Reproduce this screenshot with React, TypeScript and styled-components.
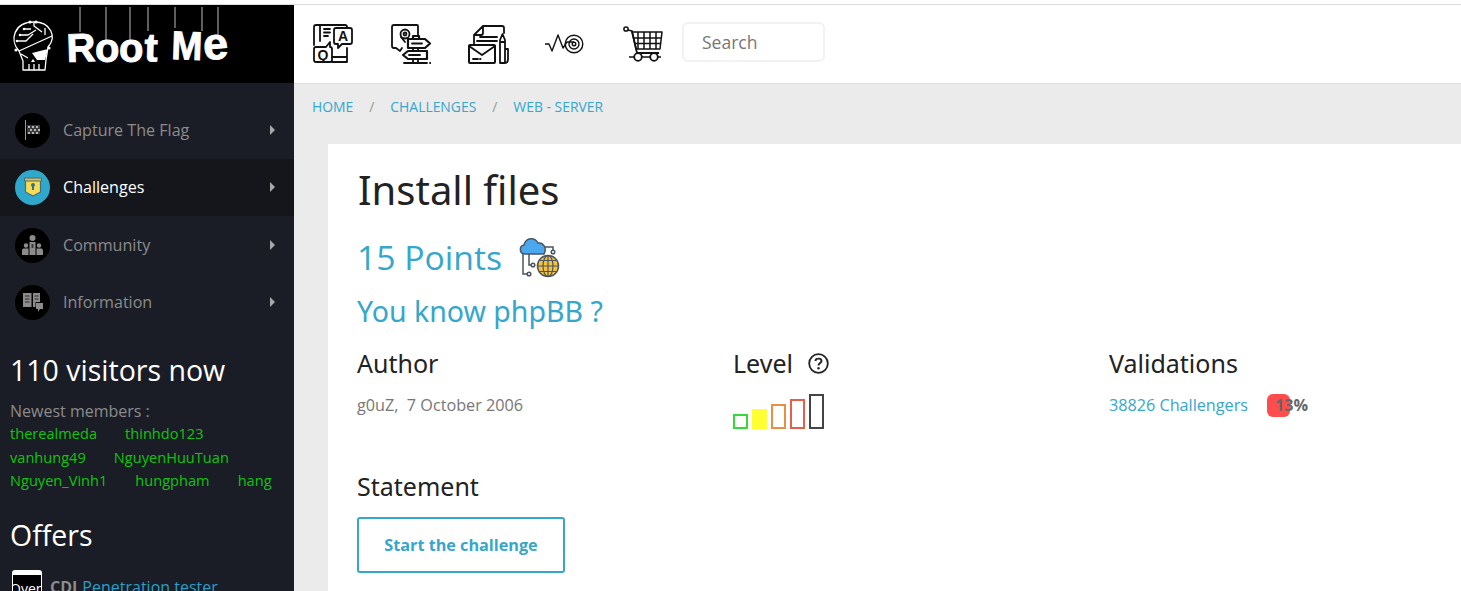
import React from 'react';
import styled, { createGlobalStyle } from 'styled-components';

const BLUE = '#36a6cb';

const GlobalStyle = createGlobalStyle`
    html, body {
        margin: 0;
        padding: 0;
        height: 100%;
        overflow: hidden;
        background: #ffffff;
        font-family: "Open Sans", "Noto Sans", sans-serif;
    }
    * {
        box-sizing: border-box;
    }
`;

const LOGO_LETTERS = [
    { char: 'R', x: 67, y: 57, string: 80, hang: 27, rotate: -2 },
    { char: 'o', x: 95, y: 57, string: 106, hang: 35, rotate: 0 },
    { char: 'o', x: 119, y: 57, string: 130, hang: 35, rotate: 0 },
    { char: 't', x: 144, y: 56, string: 148, hang: 26, rotate: 2 },
    { char: 'M', x: 171, y: 54, string: 175, hang: 23, rotate: 2 },
    { char: 'e', x: 204, y: 55, string: 218, hang: 33, rotate: -4 },
];

const Logo = () => (
    <svg width="294" height="78" viewBox="0 0 294 78">
        <g fill="none" stroke="#fff" strokeWidth="1.3" strokeLinejoin="round">
            <path d="M19 46 C9 35 14 17 34 17 C51 17 57 32 48 42 L46 55 L45 65 H23 L23 56 Z" />
            <path d="M19 46 L52 31" />
            <path d="M17 36 H26 L33 29 M20 30 H28 L36 25 M25 24 H31 M34 17 V21 L42 27 M45 23 V30" />
            <path d="M21 49 L28 53 M29 59 V65 M34 59 V65 M39 59 V65" />
        </g>
        <path d="M32 48 L48 44 L45 55 L37 55 Z" fill="#fff" />
        <path d="M31 57 L33 54 L35 57 Z" fill="#fff" />
        <g fill="#fff">
            <circle cx="30" cy="17" r="1.6" />
            <circle cx="36" cy="17" r="1.6" />
            <circle cx="24" cy="24" r="1.3" />
            <circle cx="20" cy="30" r="1.3" />
            <circle cx="17" cy="36" r="1.3" />
            <circle cx="16" cy="45" r="1.6" />
            <circle cx="49" cy="43" r="1.6" />
        </g>
        <g stroke="#bdbdbd" strokeWidth="1">
            {LOGO_LETTERS.map(l => (
                <line key={l.string} x1={l.string} y1="2" x2={l.string} y2={l.hang} />
            ))}
            <line x1="202" y1="2" x2="202" y2="26" />
        </g>
        <g fill="#fff" stroke="#fff" strokeWidth="0.9" fontFamily="'Liberation Sans', sans-serif" fontWeight="700" fontSize="40">
            {LOGO_LETTERS.map(l => (
                <text
                    key={l.string}
                    x={l.x}
                    y={l.y}
                    fontSize={l.char === 'e' ? 45 : 40}
                    transform={`rotate(${l.rotate} ${l.x} ${l.y})`}
                    textLength={l.char === 'M' ? 31 : undefined}
                    lengthAdjust="spacingAndGlyphs"
                >
                    {l.char}
                </text>
            ))}
        </g>
    </svg>
);

const strokeProps = { fill: 'none', stroke: '#111', strokeWidth: 1.8, strokeLinejoin: 'round' as const, strokeLinecap: 'round' as const };

const FaqIcon = () => (
    <svg width="40" height="40" viewBox="0 0 40 40">
        <g {...strokeProps}>
            <path d="M1 21 V3 Q1 1 3 1 H32 Q34 1 34 3 V4 M7 1 V17 M34 24 V38 H19 M19 33 H34" />
            <path d="M11 5 H17 M11 8.500 H17 M11 12 H15" />
            <path d="M23 4 H37 Q39 4 39 6 V18 Q39 20 37 20 H29 L25 24 V20 H23 Q21 20 21 18 V6 Q21 4 23 4 Z" />
            <path d="M3 23 H13 L17 18 V23 Q19 23 19 25 V36 Q19 38 17 38 H3 Q1 38 1 36 V25 Q1 23 3 23 Z" />
        </g>
        <text x="30" y="17" textAnchor="middle" fontFamily="'Liberation Sans', sans-serif" fontWeight="700" fontSize="14" fill="#111">A</text>
        <text x="10" y="36" textAnchor="middle" fontFamily="'Liberation Sans', sans-serif" fontWeight="700" fontSize="14" fill="#111">Q</text>
    </svg>
);

const RoadmapIcon = () => (
    <svg width="40" height="41" viewBox="0 0 40 41">
        <g {...strokeProps}>
            <path d="M27 11 V2 Q27 1 26 1 H3 Q1 1 1 3 V22 Q1 24 3 24 H5 L9 27 L11 24" />
            <circle cx="14" cy="10" r="4.500" />
            <circle cx="14" cy="10" r="1.500" />
            <path d="M10 13 L14 18" />
            <path d="M17 15 H34 L39 19.500 L34 24 H17 Z M22 15 V12 H28 V15" strokeWidth="2.200" />
            <path d="M17 27 H36 V35 H17 L12 31 Z" strokeWidth="2.200" />
            <path d="M22 24 V27 M27 24 V27 M22 35 V39 M27 35 V39 M13 39 H36 M39 39 H39.500 M21 19.500 H31 M18 31 H29" />
        </g>
    </svg>
);

const DocsIcon = () => (
    <svg width="41" height="39" viewBox="0 0 41 39">
        <g {...strokeProps}>
            <path d="M6 20 V10 L15 1 H34 Q36 1 36 3 V8 M15 1 V8 Q15 10 13 10 H6" />
            <path d="M12 12 H29 M9 16 H29" />
            <rect x="1" y="20" width="26" height="18" rx="1" strokeWidth="2" />
            <path d="M1 21 L14 30 L27 21 M5 34 H10 M12 34 H12.500" />
            <path d="M32 15 L34.500 9 L37 15 V38 H32 Z M32 17 H37 M37 24 H40 V34 Q40 38 37 38" />
        </g>
    </svg>
);

const TargetIcon = () => (
    <svg width="39" height="22" viewBox="0 0 39 22">
        <g fill="none" stroke="#111" strokeWidth="1.400" strokeLinejoin="round">
            <path d="M0 11 H4 L7 18 L13 2 L18 15 L22 9 H29" />
            <circle cx="29" cy="11" r="8.800" />
            <circle cx="29" cy="11" r="5" />
            <circle cx="29" cy="11" r="1.800" />
        </g>
    </svg>
);

const CartIcon = () => (
    <svg width="40" height="36" viewBox="0 0 40 36">
        <g fill="none" stroke="#111" strokeWidth="1.500" strokeLinejoin="round">
            <circle cx="3" cy="3" r="2.100" />
            <path d="M5 4 L9 5 L14 27 H36" strokeWidth="1.800" />
            <path d="M9 6 H39 L37 23 H13 Z" />
            <path d="M15 6 V23 M21 6 V23 M27 6 V23 M33 6 V23 M10 12 H38 M11 17.500 H37" />
            <circle cx="15" cy="31" r="3.800" strokeWidth="1.800" />
            <circle cx="31" cy="31" r="3.800" strokeWidth="1.800" />
            <path d="M6 31 H11 M19 31 H27 M35 31 H38" />
        </g>
    </svg>
);

const FlagIcon = () => (
    <svg width="17" height="20" viewBox="0 0 17 20">
        <path d="M1.500 0 V20" stroke="#9a9a9a" />
        <path d="M3 5 H16 V14 H3 Z" fill="#3b3b3b" />
        <path d="M4 6 H6 V8 H4 Z M8 6 H10 V8 H8 Z M12 6 H14 V8 H12 Z M6 9 H8 V11 H6 Z M10 9 H12 V11 H10 Z M14 9 H16 V11 H14 Z M4 12 H6 V14 H4 Z M8 12 H10 V14 H8 Z M12 12 H14 V14 H12 Z" fill="#b5b5b5" />
    </svg>
);

const ShieldIcon = () => (
    <svg width="18" height="20" viewBox="0 0 18 20">
        <path d="M1.500 2 H16.500 V15 L9 19 L1.500 15 Z" fill="#f6dc55" stroke="#3f6f88" strokeWidth="1.200" />
        <path d="M0.500 1 H17.500 V4 H0.500 Z" fill="#e0bd3d" stroke="#3f6f88" strokeWidth="1" />
        <circle cx="9" cy="8" r="2" fill="#3f6f88" />
        <path d="M8 9 H10 V13 H8 Z" fill="#3f6f88" />
    </svg>
);

const PeopleIcon = () => (
    <svg width="21" height="20" viewBox="0 0 21 20">
        <g fill="#8c8c8c">
            <circle cx="10.500" cy="3" r="3" />
            <path d="M7.500 7 H13.500 V20 H7.500 Z" />
            <circle cx="4" cy="10.500" r="2.200" />
            <circle cx="17" cy="10.500" r="2.200" />
            <path d="M0 20 V16 C0 14 1 13.500 2 13.500 H6.500 V20 Z M14.500 13.500 H19 C20 13.500 21 14 21 16 V20 H14.500 Z" />
        </g>
        <path d="M9.500 9 H11.500 V13 H9.500 Z" fill="#3a3a3a" />
    </svg>
);

const BookIcon = () => (
    <svg width="20" height="20" viewBox="0 0 20 20">
        <path d="M0 1 H8.500 V15 H0 Z M10 1 H17 V10 H12.500 V15 H10 Z" fill="#8c8c8c" />
        <path d="M13 11 H20 V17 H17 L15 20 V17 H13 Z" fill="#8c8c8c" />
        <path d="M2 4 H6.500 M2 7 H6.500 M2 10 H6.500 M11.500 4 H15.500 M11.500 7 H15.500" stroke="#2b2b2b" />
    </svg>
);

const CloudIcon = () => (
    <svg width="41" height="41" viewBox="0 0 41 41">
        <g fill="none" stroke="#4a5560" strokeWidth="1.500">
            <path d="M4 17 V37 H8 M10 17 V28 H12 M20 10 H34 V13" />
            <circle cx="34" cy="15" r="1.800" />
            <circle cx="14" cy="28" r="1.800" />
            <circle cx="10" cy="37" r="1.800" />
        </g>
        <path d="M6 17 C0 17 0 9 5 8 C7 0 16 0 19 6 C25 5 28 12 25 17 Z" fill="#4aa8ee" stroke="#4a5560" strokeWidth="1.500" />
        <circle cx="29" cy="29" r="10.500" fill="#f7c23c" stroke="#4a5560" strokeWidth="1.500" />
        <g fill="none" stroke="#4a5560" strokeWidth="1.200">
            <ellipse cx="29" cy="29" rx="5" ry="10.500" />
            <path d="M29 18.500 V39.500 M18.500 29 H39.500 M20.500 23.500 H37.500 M20.500 34.500 H37.500" />
        </g>
    </svg>
);

const QuestionIcon = () => (
    <svg width="21" height="21" viewBox="0 0 21 21">
        <circle cx="10.500" cy="10.500" r="9.300" fill="none" stroke="#222" strokeWidth="1.800" />
        <path d="M7.500 8 C7.500 4.800 13.500 4.800 13.500 8 C13.500 10 10.500 10 10.500 12.500" fill="none" stroke="#222" strokeWidth="1.900" />
        <circle cx="10.500" cy="15.200" r="1.200" fill="#222" />
    </svg>
);

const MENU = [
    { label: 'Capture The Flag', icon: <FlagIcon /> },
    { label: 'Challenges', icon: <ShieldIcon />, active: true },
    { label: 'Community', icon: <PeopleIcon /> },
    { label: 'Information', icon: <BookIcon /> },
];

const MEMBERS = [
    ['therealmeda', 'thinhdo123'],
    ['vanhung49', 'NguyenHuuTuan'],
    ['Nguyen_Vinh1', 'hungpham', 'hang'],
];

const BARS = [
    { height: 15, color: '#35d93a' },
    { height: 20, color: '#ffff33', filled: true },
    { height: 25, color: '#e58f47' },
    { height: 30, color: '#e5604c' },
    { height: 35, color: '#444444' },
];

const App: React.FC = () => (
    <>
        <GlobalStyle />
        <SPage>
            <SSidebar>
                <SLogoBar>
                    <Logo />
                </SLogoBar>
                <SMenu>
                    {MENU.map(item => (
                        <SMenuItem key={item.label} $active={item.active}>
                            <SMenuIcon $active={item.active}>{item.icon}</SMenuIcon>
                            <SMenuLabel>{item.label}</SMenuLabel>
                            <SCaret />
                        </SMenuItem>
                    ))}
                </SMenu>
                <SSideTitle>110 visitors now</SSideTitle>
                <SNewest>Newest members :</SNewest>
                {MEMBERS.map(row => (
                    <SMemberRow key={row[0]}>
                        {row.map(name => (
                            <span key={name}>{name}</span>
                        ))}
                    </SMemberRow>
                ))}
                <SOffersTitle>Offers</SOffersTitle>
                <SOffer>
                    <SOfferLogo>
                        <SOfferLogoText>Oven</SOfferLogoText>
                    </SOfferLogo>
                    <SOfferKind>CDI</SOfferKind>
                    <SOfferLink>Penetration tester</SOfferLink>
                </SOffer>
            </SSidebar>
            <SMain>
                <STopBar>
                    <SIconSlot $width={78}><FaqIcon /></SIconSlot>
                    <SIconSlot $width={77}><RoadmapIcon /></SIconSlot>
                    <SIconSlot $width={77}><DocsIcon /></SIconSlot>
                    <SIconSlot $width={78}><TargetIcon /></SIconSlot>
                    <SIconSlot $width={59}><CartIcon /></SIconSlot>
                    <SSearch placeholder="Search" readOnly />
                </STopBar>
                <SBreadcrumb>
                    <SCrumb>HOME</SCrumb>
                    <SCrumbSep>/</SCrumbSep>
                    <SCrumb>CHALLENGES</SCrumb>
                    <SCrumbSep>/</SCrumbSep>
                    <SCrumb>WEB - SERVER</SCrumb>
                </SBreadcrumb>
                <SCard>
                    <STitle>Install files</STitle>
                    <SPoints>
                        15 Points
                        <CloudIcon />
                    </SPoints>
                    <SSubtitle>You know phpBB ?</SSubtitle>
                    <SColumns>
                        <div>
                            <SHeading>Author</SHeading>
                            <SAuthor>g0uZ,&nbsp; 7 October 2006</SAuthor>
                        </div>
                        <div>
                            <SHeading>
                                Level
                                <QuestionIcon />
                            </SHeading>
                            <SBars>
                                {BARS.map(bar => (
                                    <SBar key={bar.height} $height={bar.height} $color={bar.color} $filled={bar.filled} />
                                ))}
                            </SBars>
                        </div>
                        <div>
                            <SHeading>Validations</SHeading>
                            <SValidations>
                                <SChallengers>38826 Challengers</SChallengers>
                                <SRate>13%</SRate>
                            </SValidations>
                        </div>
                    </SColumns>
                    <SStatement>Statement</SStatement>
                    <SStartButton>Start the challenge</SStartButton>
                </SCard>
            </SMain>
        </SPage>
    </>
);

export default App;

const SPage = styled.div`
    display: flex;
    width: 1461px;
    height: 591px;
    overflow: hidden;
    padding-top: 5px;
    background: linear-gradient(#ffffff 4px, #dcdcdc 4px, #dcdcdc 5px, #ffffff 5px);
`;

const SSidebar = styled.aside`
    width: 294px;
    flex-shrink: 0;
    background-color: #1a1d26;
    color: #ffffff;
`;

const SLogoBar = styled.div`
    height: 78px;
    background-color: #000000;

    svg {
        display: block;
    }
`;

const SMenu = styled.nav`
    padding-top: 19px;
`;

const SMenuItem = styled.div<{ $active?: boolean }>`
    display: flex;
    align-items: center;
    height: 57px;
    padding: 0 15px 1px;
    background-color: ${p => (p.$active ? '#14161c' : 'transparent')};
    color: ${p => (p.$active ? '#ffffff' : '#8c8c8c')};

    &:nth-child(n + 3) {
        padding: 1px 15px 0;
    }
`;

const SMenuIcon = styled.div<{ $active?: boolean }>`
    display: flex;
    align-items: center;
    justify-content: center;
    width: 35px;
    height: 35px;
    border-radius: 50%;
    background-color: ${p => (p.$active ? '#2fa8cc' : '#000000')};
`;

const SMenuLabel = styled.span`
    margin-left: 13px;
    font-size: 16.100px;
    flex: 1;
`;

const SCaret = styled.span`
    width: 0;
    height: 0;
    margin-right: 4px;
    border-left: 5px solid #a8a8a8;
    border-top: 5px solid transparent;
    border-bottom: 5px solid transparent;
`;

const SSideTitle = styled.div`
    margin: 22px 0 0 10px;
    font-size: 28.500px;
    line-height: 37px;
`;

const SNewest = styled.div`
    margin: 11px 0 0 10px;
    font-size: 16px;
    line-height: 22px;
    color: #8c8c8c;
`;

const SMemberRow = styled.div`
    display: flex;
    gap: 28px;
    margin-left: 10px;
    font-size: 14.600px;
    line-height: 23.500px;
    color: #0fc40f;
`;

const SOffersTitle = styled.div`
    margin: 23px 0 0 10px;
    font-size: 28.500px;
    line-height: 38px;
`;

const SOffer = styled.div`
    display: flex;
    align-items: flex-start;
    margin: 16px 0 0 12px;
    font-size: 16px;
    line-height: 22px;
`;

const SOfferLogo = styled.div`
    width: 30px;
    height: 30px;
    padding: 5px 1px 0;
    overflow: hidden;
    border-radius: 3px;
    background-color: #ffffff;
`;

const SOfferLogoText = styled.div`
    height: 25px;
    padding-top: 3px;
    overflow: hidden;
    background-color: #000000;
    color: #ffffff;
    font-size: 14px;
    line-height: 22px;
    text-indent: -3px;
    white-space: nowrap;
`;

const SOfferKind = styled.b`
    margin: 6px 0 0 8px;
    color: #8c8c8c;
`;

const SOfferLink = styled.span`
    margin: 6px 0 0 5px;
    color: #2a9fc7;
`;

const SMain = styled.main`
    flex: 1;
    display: flex;
    flex-direction: column;
    background-color: #ebebeb;
`;

const STopBar = styled.header`
    display: flex;
    align-items: center;
    height: 79px;
    padding-left: 19px;
    background-color: #ffffff;
    border-bottom: 1px solid #dedede;
`;

const SIconSlot = styled.div<{ $width: number }>`
    width: ${p => p.$width}px;
    display: flex;
    align-items: center;

    svg {
        display: block;
    }
`;

const SSearch = styled.input`
    width: 143px;
    height: 40px;
    margin-bottom: 4px;
    padding: 0 18px;
    border: 2px solid #f2f2f2;
    border-radius: 6px;
    font-family: inherit;
    font-size: 17.500px;
    outline: none;

    &::placeholder {
        color: #777777;
        opacity: 1;
    }
`;

const SBreadcrumb = styled.div`
    display: flex;
    align-items: center;
    height: 45px;
    padding-left: 18px;
    font-size: 13.900px;
`;

const SCrumb = styled.span`
    color: ${BLUE};
`;

const SCrumbSep = styled.span`
    margin: 0 16px;
    color: #999999;
`;

const SCard = styled.section`
    flex: 1;
    margin: 15px 0 0 34px;
    padding: 19px 0 0 29px;
    background-color: #ffffff;
    color: #222222;
`;

const STitle = styled.h1`
    margin: 0 0 0 1px;
    font-family: "Noto Sans", "Open Sans", sans-serif;
    font-size: 40px;
    font-weight: 400;
    line-height: 54px;
`;

const SPoints = styled.div`
    display: flex;
    align-items: center;
    gap: 17px;
    margin: 17px 0 0;
    font-size: 33.700px;
    line-height: 46px;
    color: ${BLUE};

    svg {
        display: block;
    }
`;

const SSubtitle = styled.h2`
    margin: 12px 0 0;
    font-family: "Noto Sans", "Open Sans", sans-serif;
    font-size: 28.500px;
    font-weight: 400;
    line-height: 38px;
    color: ${BLUE};
`;

const SColumns = styled.div`
    display: grid;
    grid-template-columns: 376px 376px 376px;
    margin-top: 16px;
`;

const SHeading = styled.h3`
    display: flex;
    align-items: center;
    gap: 15px;
    height: 34px;
    margin: 0;
    font-family: "Noto Sans", "Open Sans", sans-serif;
    font-size: 25px;
    font-weight: 400;
    line-height: 34px;
`;

const SAuthor = styled.div`
    margin-top: 15px;
    font-size: 16.200px;
    line-height: 20px;
    color: #777777;
`;

const SBars = styled.div`
    display: flex;
    align-items: flex-end;
    gap: 4px;
    height: 35px;
    margin-top: 14px;
`;

const SBar = styled.div<{ $height: number; $color: string; $filled?: boolean }>`
    width: 15px;
    height: ${p => p.$height}px;
    border: 2px solid ${p => p.$color};
    background-color: ${p => (p.$filled ? p.$color : 'transparent')};
`;

const SValidations = styled.div`
    display: flex;
    align-items: center;
    margin-top: 15px;
    font-size: 16.200px;
    line-height: 20px;
`;

const SChallengers = styled.span`
    color: ${BLUE};
`;

const SRate = styled.span`
    position: relative;
    isolation: isolate;
    margin-left: 27px;
    font-weight: 700;
    color: #666666;

    &::before {
        content: '';
        position: absolute;
        z-index: -1;
        left: -8px;
        top: -1px;
        width: 23px;
        height: 23px;
        border-radius: 6px;
        background-color: #ff4d4d;
    }
`;

const SStatement = styled.h3`
    margin: 40px 0 0;
    font-family: "Noto Sans", "Open Sans", sans-serif;
    font-size: 25px;
    font-weight: 400;
    line-height: 34px;
`;

const SStartButton = styled.button`
    display: block;
    width: 208px;
    height: 56px;
    margin-top: 14px;
    border: 2px solid ${BLUE};
    border-radius: 3px;
    background-color: #ffffff;
    font-family: inherit;
    font-size: 16.200px;
    font-weight: 700;
    color: ${BLUE};
`;
